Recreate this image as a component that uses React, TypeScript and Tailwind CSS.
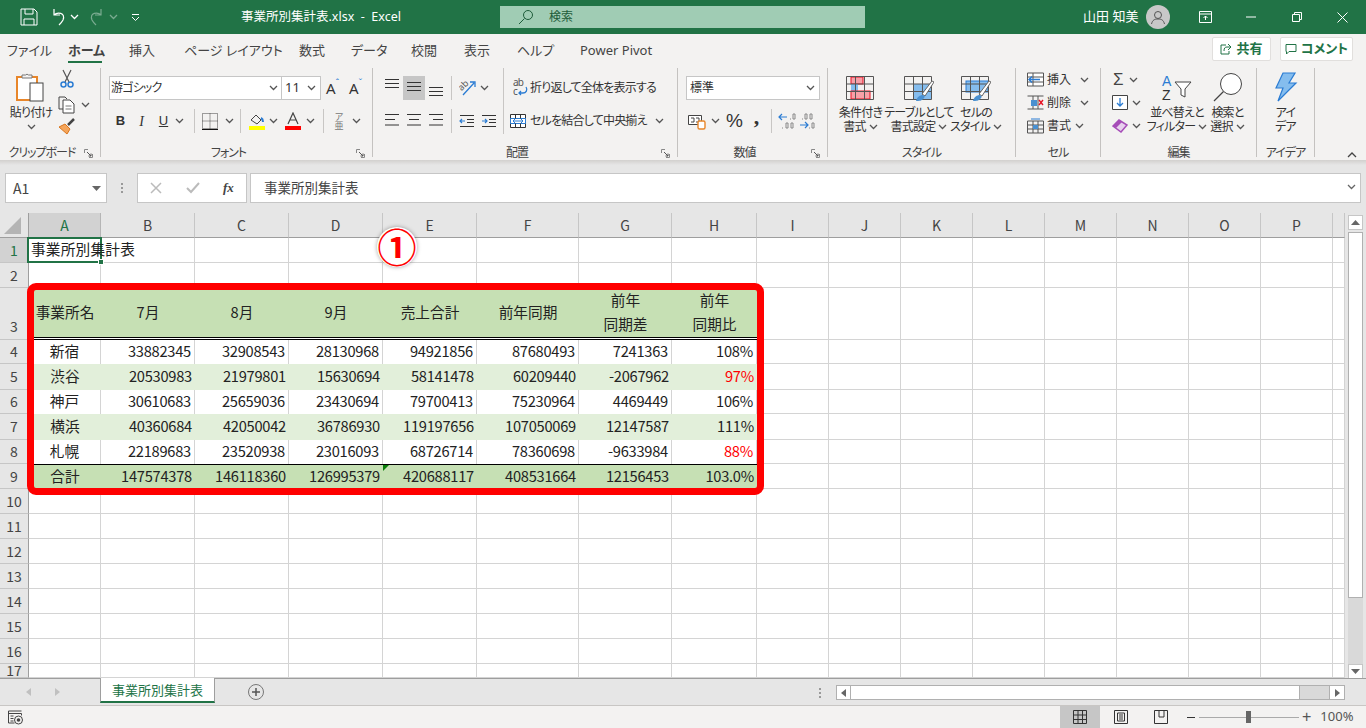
import type { ReactNode } from 'react'

const tabs = [
  { label: 'ファイル', cls: 'w-[38px] ml-[7px]' },
  { label: 'ホーム', cls: 'w-[34px] ml-[23px] font-bold border-b-[2px] border-[#217346]' },
  { label: '挿入', cls: 'w-[26px] ml-[27px]' },
  { label: 'ページ レイアウト', cls: 'w-[86px] ml-[29px]' },
  { label: '数式', cls: 'w-[26px] ml-[29px]' },
  { label: 'データ', cls: 'w-[33px] ml-[26px]' },
  { label: '校閲', cls: 'w-[26px] ml-[27px]' },
  { label: '表示', cls: 'w-[26px] ml-[27px]' },
  { label: 'ヘルプ', cls: 'w-[33px] ml-[27px]' },
  { label: 'Power Pivot', cls: 'w-[76px] ml-[30px]' },
]

const columns = ['A', 'B', 'C', 'D', 'E', 'F', 'G', 'H', 'I', 'J', 'K', 'L', 'M', 'N', 'O', 'P', '']

const tableRows: Record<number, string[]> = {
  4: ['新宿', '33882345', '32908543', '28130968', '94921856', '87680493', '7241363', '108%'],
  5: ['渋谷', '20530983', '21979801', '15630694', '58141478', '60209440', '-2067962', '97%'],
  6: ['神戸', '30610683', '25659036', '23430694', '79700413', '75230964', '4469449', '106%'],
  7: ['横浜', '40360684', '42050042', '36786930', '119197656', '107050069', '12147587', '111%'],
  8: ['札幌', '22189683', '23520938', '23016093', '68726714', '78360698', '-9633984', '88%'],
  9: ['合計', '147574378', '146118360', '126995379', '420688117', '408531664', '12156453', '103.0%'],
}

const headerRow = ['事業所名', '7月', '8月', '9月', '売上合計', '前年同期', '前年\n同期差', '前年\n同期比']

const rowHeights: Record<number, string> = {
  3: 'h-[52px]',
  4: 'h-[24px]',
  5: 'h-[26px]',
  6: 'h-[24px]',
  7: 'h-[26px]',
  8: 'h-[24px]',
  17: 'h-[14px]',
}

function Chev({ color = '#555' }: { color?: string }) {
  return (
    <svg width="9" height="6" viewBox="0 0 9 6" className="shrink-0">
      <path d="M1 1l3.500 3.500L8 1" fill="none" stroke={color} strokeWidth="1.300" />
    </svg>
  )
}

function Launcher() {
  return (
    <svg width="9" height="9" viewBox="0 0 9 9">
      <path d="M.5 4V.5H4M8.500 5v3.500H5" fill="none" stroke="#888" />
      <path d="M3 3l4 4M7 4.500V7H4.500" fill="none" stroke="#555" />
    </svg>
  )
}

function Sep() {
  return <div className="w-px h-[24px] bg-[#c8c6c4] shrink-0" />
}

function Lines({ ys, widths }: { ys: number[]; widths: [number, number][] }) {
  return (
    <svg width="16" height="24" viewBox="0 0 16 24">
      {ys.map((y, i) => (
        <path key={y} d={`M${widths[i][0]} ${y}H${widths[i][1]}`} stroke="#333" strokeWidth="1" />
      ))}
    </svg>
  )
}

function Group({ w, label, launcher, children }: { w: string; label: string; launcher?: boolean; children: ReactNode }) {
  return (
    <div className={`${w} h-[89px] shrink-0 border-r border-[#c4c2c0] flex flex-col`}>
      <div className="h-[76px] flex">{children}</div>
      <div className="h-[13px] flex leading-[16px] pt-[1px] text-[12px] tracking-[-1px] text-[#444]">
        <span className="flex-1 text-center">{label}</span>
        {launcher && (
          <span className="w-[16px] pt-[4px]">
            <Launcher />
          </span>
        )}
      </div>
    </div>
  )
}

function BigBtn({ w, icon, l1, l2, noChev }: { w: string; icon: ReactNode; l1: string; l2: string; noChev?: boolean }) {
  return (
    <div className={`${w} pt-[8px] flex flex-col items-center text-[12px] tracking-[-0.8px] leading-[14px] text-[#333] whitespace-nowrap`}>
      <div className="h-[30px]">{icon}</div>
      <div>{l1}</div>
      <div className="flex items-center gap-[3px]">
        {l2}
        {!noChev && <Chev />}
      </div>
    </div>
  )
}

function SmallRow({ icon, label, chevCls }: { icon: ReactNode; label: string; chevCls: string }) {
  return (
    <div className="h-[23px] flex items-center text-[12px] text-[#333]">
      <div className="w-[20px]">{icon}</div>
      <span>{label}</span>
      <span className={chevCls}>
        <Chev />
      </span>
    </div>
  )
}

function ClipboardGroup() {
  return (
    <Group w="w-[101px]" label="クリップボード" launcher>
      <div className="w-[60px] pt-[4px] flex flex-col items-center text-[12px] tracking-[-0.8px] leading-[14px] text-[#333] pl-[2px]">
        <div className="h-[34px] w-[30px]">
          <svg width="30" height="30" viewBox="0 0 30 30">
            <rect x="1" y="5" width="20" height="23" fill="#fff" stroke="#e8862a" strokeWidth="2" />
            <path d="M6 6V3h3.500a2 2 0 0 1 3 0H16v3z" fill="#f3f2f1" stroke="#777" />
            <rect x="14" y="11" width="13" height="18" fill="#fff" stroke="#444" />
          </svg>
        </div>
        <div>貼り付け</div>
        <div className="h-[14px] flex items-center">
          <Chev />
        </div>
      </div>
      <div className="flex flex-col">
        <div className="h-[23px]">
          <svg width="16" height="20" viewBox="0 0 16 20" className="ml-[-1px] mt-[1px]">
            <path d="M4 1l6 12M12 1L6 13" stroke="#555" strokeWidth="1.200" fill="none" />
            <circle cx="4.500" cy="15.500" r="2.500" fill="none" stroke="#2b7cd3" strokeWidth="1.500" />
            <circle cx="11.500" cy="15.500" r="2.500" fill="none" stroke="#2b7cd3" strokeWidth="1.500" />
          </svg>
        </div>
        <div className="h-[24px] flex items-center gap-[5px] pt-[3px] ml-[-2px]">
          <svg width="18" height="18" viewBox="0 0 18 18">
            <path d="M5 13H1V1h6l2 2" fill="none" stroke="#444" />
            <path d="M5 4h7l4 4v9H5z" fill="#fff" stroke="#444" />
            <path d="M7.500 10h6M7.500 13h6" stroke="#777" />
          </svg>
          <Chev />
        </div>
        <div className="h-[23px] pt-[2px] ml-[-2px]">
          <svg width="18" height="18" viewBox="0 0 18 18">
            <path d="M1 10l6-3 5 5-3 5z" fill="#f5a55a" stroke="#d9761e" />
            <path d="M10 8l6-6" stroke="#444" strokeWidth="2.500" />
          </svg>
        </div>
      </div>
    </Group>
  )
}

function FontGroup() {
  return (
    <Group w="w-[272px]" label="フォント" launcher>
      <div className="pt-[8px] flex flex-col gap-[9px] text-[#333]">
        <div className="flex h-[24px] items-center pl-[8px]">
          <div className="w-[173px] h-[24px] bg-white border border-[#c6c6c6] flex items-center justify-between pl-[1px] pr-[3px] text-[12px] tracking-[-0.8px]">
            游ゴシック
            <Chev />
          </div>
          <div className="w-[40px] h-[24px] ml-[-1px] bg-white border border-[#c6c6c6] flex items-center justify-between pl-[3px] pr-[4px] text-[13px]">
            11
            <Chev />
          </div>
          <div className="w-[22px] ml-[-1px] pl-[6px] text-[15px] flex items-start">
            A<span className="text-[#2b7cd3] text-[9px] leading-[12px]">ˆ</span>
          </div>
          <div className="w-[22px] ml-[1px] pl-[6px] text-[15px] flex items-start">
            A<span className="text-[#2b7cd3] text-[9px] leading-[12px]">ˇ</span>
          </div>
        </div>
        <div className="flex h-[24px] items-center pl-[9px]">
          <div className="w-[21px] text-center font-['Liberation_Sans'] font-bold text-[13px]">B</div>
          <div className="w-[21px] text-center font-['Liberation_Serif'] italic text-[14px]">I</div>
          <div className="w-[23px] text-center font-['Liberation_Sans'] text-[13px] underline">U</div>
          <div className="w-[14px]">
            <Chev />
          </div>
          <div className="ml-[5px]">
            <Sep />
          </div>
          <div className="w-[30px] flex justify-center">
            <svg width="16" height="17" viewBox="0 0 16 17">
              <path d="M.5.5h15v15H.5zM8 .5v15M.5 8h15" fill="none" stroke="#444" strokeDasharray="1 1" />
              <path d="M0 16.500h16" stroke="#111" />
            </svg>
          </div>
          <div className="w-[15px]">
            <Chev />
          </div>
          <Sep />
          <div className="w-[29px] flex justify-center ml-[1px]">
            <svg width="16" height="18" viewBox="0 0 16 18">
              <path d="M2 8l5-5 5 5-4 4z" fill="none" stroke="#444" />
              <path d="M12 6c2 1 2 3 2 4" stroke="#2b7cd3" strokeWidth="2" fill="none" />
              <rect y="14" width="16" height="4" fill="#ffff00" />
            </svg>
          </div>
          <div className="w-[13px] ml-[-2px]">
            <Chev />
          </div>
          <div className="w-[22px] flex justify-center">
            <svg width="16" height="18" viewBox="0 0 16 18">
              <path d="M3 12L8 1l5 11M5 8h6" fill="none" stroke="#444" strokeWidth="1.200" />
              <rect y="14" width="16" height="4" fill="#ff0000" />
            </svg>
          </div>
          <div className="w-[13px] ml-[2px]">
            <Chev />
          </div>
          <div className="ml-[4px]">
            <Sep />
          </div>
          <div className="w-[30px] text-center text-[9px] leading-[9px] text-[#777]">
            ア<br />亜
          </div>
          <div className="w-[15px] ml-[-2px]">
            <Chev />
          </div>
        </div>
      </div>
    </Group>
  )
}

function AlignGroup() {
  return (
    <Group w="w-[305px]" label="配置" launcher>
      <div className="w-[131px] pl-[8px] pt-[8px] flex flex-col gap-[9px] border-r border-[#c8c6c4] h-[66px]">
        <div className="flex h-[24px] items-center">
          <div className="w-[22px] flex justify-center">
            <Lines ys={[3.5, 7.5, 11.5]} widths={[[1, 15], [1, 15], [1, 15]]} />
          </div>
          <div className="w-[22px] h-[24px] flex justify-center bg-[#c6c6c6]">
            <Lines ys={[6.5, 10.5, 14.5]} widths={[[1, 15], [1, 15], [1, 15]]} />
          </div>
          <div className="w-[22px] flex justify-center">
            <Lines ys={[11.5, 15.5, 19.5]} widths={[[1, 15], [1, 15], [1, 15]]} />
          </div>
          <div className="ml-[4px]">
            <Sep />
          </div>
          <div className="w-[24px] ml-[4px] flex justify-center">
            <svg width="18" height="18" viewBox="0 0 18 18">
              <path d="M4 16L15 4M11 3h5v5" fill="none" stroke="#2b7cd3" strokeWidth="1.300" />
              <text x="0" y="10" fontSize="9" fill="#555" transform="rotate(-45 4 8)">ab</text>
            </svg>
          </div>
          <Chev />
        </div>
        <div className="flex h-[24px] items-center">
          <div className="w-[22px] flex justify-center">
            <Lines ys={[5.5, 10.5, 16]} widths={[[1, 15], [1, 11], [1, 15]]} />
          </div>
          <div className="w-[22px] flex justify-center">
            <Lines ys={[5.5, 10.5, 16]} widths={[[1, 15], [3, 13], [1, 15]]} />
          </div>
          <div className="w-[22px] flex justify-center">
            <Lines ys={[5.5, 10.5, 16]} widths={[[1, 15], [5, 15], [1, 15]]} />
          </div>
          <div className="ml-[4px]">
            <Sep />
          </div>
          {[0, 1].map((i) => (
            <div key={i} className={i === 0 ? 'w-[22px] ml-[4px] flex justify-center' : 'w-[22px] flex justify-center'}>
              <svg width="16" height="16" viewBox="0 0 16 16">
                <path d="M1 2.500h14M1 13.500h14" stroke="#333" />
                <path d="M8 6.500h7M8 9.500h7" stroke="#333" />
                <path d={i === 0 ? 'M6 8H1m2-2L1 8l2 2' : 'M1 8h5M4 6l2 2-2 2'} fill="none" stroke="#2b7cd3" strokeWidth="1.200" />
              </svg>
            </div>
          ))}
        </div>
      </div>
      <div className="pt-[8px] flex flex-col gap-[9px] text-[12px] tracking-[-0.8px] text-[#333] whitespace-nowrap">
        <div className="flex h-[24px] items-center pl-[6px]">
          <div className="w-[20px] pl-[3px]">
            <svg width="16" height="20" viewBox="0 0 16 20">
              <text x="0" y="8" fontSize="10" fill="#555">ab</text>
              <text x="0" y="17" fontSize="10" fill="#555">c</text>
              <path d="M13 9c2 3 0 6-3 6H6m2-2l-2 2 2 2" fill="none" stroke="#2b7cd3" strokeWidth="1.300" />
            </svg>
          </div>
          折り返して全体を表示する
        </div>
        <div className="flex h-[24px] items-center pl-[6px]">
          <div className="w-[20px]">
            <svg width="16" height="16" viewBox="0 0 16 16">
              <path d="M.5 1.500h15v13H.5z" fill="#fff" stroke="#333" />
              <path d="M.5 5.500h15v5H.5z" fill="#fff" stroke="#2b7cd3" />
              <path d="M5.500 1.500v4M10.500 1.500v4M5.500 10.500v4M10.500 10.500v4" stroke="#333" />
              <path d="M3 8h10M5 6l-2 2 2 2M11 6l2 2-2 2" fill="none" stroke="#2b7cd3" />
            </svg>
          </div>
          <span className="w-[125px]">セルを結合して中央揃え</span>
          <Chev />
        </div>
      </div>
    </Group>
  )
}

function NumberGroup() {
  return (
    <Group w="w-[150px]" label="数値" launcher>
      <div className="pt-[8px] pl-[8px] flex flex-col gap-[9px] text-[#333]">
        <div className="w-[134px] h-[24px] bg-white border border-[#c6c6c6] flex items-center justify-between pl-[3px] pr-[4px] text-[12px]">
          標準
          <Chev />
        </div>
        <div className="flex h-[24px] items-center pl-[2px]">
          <svg width="18" height="18" viewBox="0 0 18 18">
            <path d="M.5 3.500h13v9H.5z" fill="#fff" stroke="#444" />
            <path d="M3 6h3v4H3M8 6h3v4H8" fill="none" stroke="#444" />
            <rect x="10" y="9" width="7" height="8" rx="1.500" fill="#fff" stroke="#e8862a" strokeWidth="1.400" />
          </svg>
          <div className="w-[18px] pl-[5px]">
            <Chev />
          </div>
          <div className="w-[21px] text-center text-[19px] leading-[24px] font-['Liberation_Sans']">%</div>
          <div className="w-[17px] ml-[3px] text-center text-[22px] leading-[18px] mt-[-8px] font-bold font-['Liberation_Serif']">,</div>
          <div className="ml-[6px]">
            <Sep />
          </div>
          <div className="w-[24px] flex justify-center ml-[3px]">
            <svg width="20" height="18" viewBox="0 0 20 18">
              <path d="M10 5H2m3-3L2 5l3 3" fill="none" stroke="#2b7cd3" strokeWidth="1.200" />
              <path d="M13 7h1M16 2h2v5h-2z M5 16h1M9 11h2v5H9zM14 11h2v5h-2z" fill="none" stroke="#888" />
            </svg>
          </div>
          <div className="w-[18px] flex justify-center">
            <svg width="18" height="18" viewBox="0 0 18 18">
              <path d="M3 7h1M6 2h2v5H6zM11 2h2v5h-2zM10 16h1M13 11h2v5h-2z" fill="none" stroke="#888" />
              <path d="M1 13h8m-3-3l3 3-3 3" fill="none" stroke="#2b7cd3" strokeWidth="1.200" />
            </svg>
          </div>
        </div>
      </div>
    </Group>
  )
}

function TableIcon({ kind }: { kind: 'cond' | 'table' | 'cell' }) {
  return (
    <svg width="30" height="26" viewBox="0 0 30 26">
      {kind === 'cond' && (
        <>
          <rect x="5" y="1" width="12" height="7" fill="#f8a0a8" stroke="#e81123" />
          <rect x="5" y="8" width="7" height="7" fill="#85bdee" />
          <rect x="5" y="15" width="19" height="8" fill="#f8a0a8" stroke="#e81123" />
        </>
      )}
      {kind === 'table' && <rect x="10" y="8" width="18" height="15" fill="#85bdee" />}
      {kind === 'cell' && <rect x="5" y="5" width="22" height="11" fill="#85bdee" stroke="#2b7cd3" />}
      <path d="M.5.5h27v23H.5zM.5 8h27M.5 15.500h27M9.500 .5v23M18.500 .5v23" fill="none" stroke="#555" />
      {kind !== 'cond' && (
        <>
          <path d="M18 18L28 5l2 1-9 14z" fill="#fff" stroke="#666" />
          <path d="M12 25c1-4 4-6 7-6 2 1 2 2 1 3-2 3-5 3-8 3z" fill="#4a90d0" />
        </>
      )}
    </svg>
  )
}

function StyleGroup() {
  return (
    <Group w="w-[188px]" label="スタイル">
      <div className="flex pl-[8px]">
        <BigBtn w="w-[49px]" icon={<TableIcon kind="cond" />} l1="条件付き" l2="書式" />
        <BigBtn w="w-[68px]" icon={<TableIcon kind="table" />} l1="テーブルとして" l2="書式設定" />
        <BigBtn w="w-[46px]" icon={<TableIcon kind="cell" />} l1="セルの" l2="スタイル" />
      </div>
    </Group>
  )
}

function CellsGroup() {
  return (
    <Group w="w-[85px]" label="セル">
      <div className="pl-[11px] flex flex-col">
        <SmallRow
          label="挿入"
          chevCls="ml-[9px]"
          icon={
            <svg width="17" height="15" viewBox="0 0 17 15">
              <path d="M.5 1h16v13H.5zM.5 5h16M.5 10h16M6 1v13" fill="#fff" stroke="#555" />
              <path d="M13 7.500H2m3-3l-3 3 3 3" fill="none" stroke="#2b7cd3" strokeWidth="1.500" />
            </svg>
          }
        />
        <SmallRow
          label="削除"
          chevCls="ml-[9px]"
          icon={
            <svg width="17" height="15" viewBox="0 0 17 15">
              <path d="M.5 1h16M.5 14h16M6 1v13M11 1v13" fill="none" stroke="#555" />
              <rect x="4" y="5" width="6" height="6" fill="#4a90d0" />
              <path d="M12 5l4 5m0-5l-4 5" stroke="#e81123" strokeWidth="1.400" />
            </svg>
          }
        />
        <SmallRow
          label="書式"
          chevCls="ml-[4px]"
          icon={
            <svg width="17" height="16" viewBox="0 0 17 16">
              <path d="M.5 3h16v12H.5zM6 3v12M11 3v12M.5 7h16M.5 11h16" fill="none" stroke="#555" />
              <rect x="6" y="7" width="5" height="4" fill="#4a90d0" />
              <path d="M4 1h9" stroke="#2b7cd3" />
            </svg>
          }
        />
      </div>
    </Group>
  )
}

function EditGroup() {
  return (
    <Group w="w-[156px]" label="編集">
      <div className="w-[47px] pl-[11px] flex flex-col">
        <div className="h-[23px] flex items-center gap-[5px] text-[17px] text-[#444] pl-[1px] font-['Liberation_Sans']">
          Σ
          <Chev />
        </div>
        <div className="h-[23px] flex items-center gap-[4px]">
          <svg width="16" height="15" viewBox="0 0 16 15">
            <path d="M.5.500h15v14H.5z" fill="#fff" stroke="#444" />
            <path d="M8 3v8M5 8l3 3 3-3" fill="none" stroke="#2b7cd3" strokeWidth="1.300" />
          </svg>
          <Chev />
        </div>
        <div className="h-[23px] flex items-center gap-[4px]">
          <svg width="16" height="14" viewBox="0 0 16 14">
            <path d="M1 7l6-6 8 5-6 7z" fill="#e8d0ee" stroke="#a64db8" strokeWidth="1.500" />
            <path d="M1 7l6-6 3 2-6 6z" fill="#a64db8" />
          </svg>
          <Chev />
        </div>
      </div>
      <BigBtn
        w="w-[58px]"
        l1="並べ替えと"
        l2="フィルター"
        icon={
          <div className="relative w-[30px] h-[30px] mt-[-2px] text-[14px] leading-[14px] font-['Liberation_Sans'] tracking-normal">
            <div className="text-[#2b7cd3]">A</div>
            <div className="text-[#333]">Z</div>
            <svg width="18" height="18" viewBox="0 0 18 18" className="absolute left-[12px] top-[7px]">
              <path d="M1 1h16l-6 7v8l-4-2V8z" fill="#fff" stroke="#444" />
            </svg>
          </div>
        }
      />
      <BigBtn
        w="w-[43px]"
        l1="検索と"
        l2="選択"
        icon={
          <svg width="30" height="30" viewBox="0 0 30 30" className="mt-[-4px]">
            <circle cx="18" cy="12" r="10.500" fill="#fff" stroke="#444" />
            <path d="M10.500 19.500L1 29" stroke="#444" strokeWidth="1.200" />
          </svg>
        }
      />
    </Group>
  )
}

function Ribbon() {
  return (
    <div className="h-[96px] bg-[#f3f2f1] pt-[4px] flex relative">
      <ClipboardGroup />
      <FontGroup />
      <AlignGroup />
      <NumberGroup />
      <StyleGroup />
      <CellsGroup />
      <EditGroup />
      <Group w="w-[58px]" label="アイデア">
        <BigBtn
          w="w-[57px]"
          l1="アイ"
          l2="デア"
          noChev
          icon={
            <svg width="24" height="30" viewBox="0 0 24 30" className="mt-[-4px]">
              <path d="M9 1h12l-6 10h7L4 29l5-13H2z" fill="#85bdee" stroke="#2b7cd3" strokeWidth="1.200" />
            </svg>
          }
        />
      </Group>
      <div className="flex-1 flex justify-end items-end pr-[9px] pb-[2px]">
        <svg width="10" height="6" viewBox="0 0 10 6">
          <path d="M1 5l4-4 4 4" fill="none" stroke="#444" strokeWidth="1.300" />
        </svg>
      </div>
    </div>
  )
}

function TitleBar() {
  return (
    <div className="h-[34px] bg-[#217346] flex items-center text-white text-[12.500px]">
      <div className="w-[241px] flex items-center pl-[20px]">
        <svg width="18" height="18" viewBox="0 0 18 18">
          <path d="M1 1h13l3 3v13H1zM5 1v5h8V1M4 17v-6h10v6" fill="none" stroke="#fff" />
        </svg>
        <svg width="18" height="18" viewBox="0 0 18 18" className="ml-[11px]">
          <path d="M5 1v6h6M5 7c3-3 12-3 9 5-1 2-2 3-4 5" fill="none" stroke="#fff" strokeWidth="1.200" />
        </svg>
        <span className="ml-[3px]">
          <Chev color="#fff" />
        </span>
        <svg width="18" height="18" viewBox="0 0 18 18" className="ml-[9px] opacity-40">
          <path d="M13 1v6H7M13 7c-3-3-12-3-9 5 1 2 2 3 4 5" fill="none" stroke="#fff" strokeWidth="1.200" />
        </svg>
        <span className="ml-[3px] opacity-40">
          <Chev color="#fff" />
        </span>
        <svg width="9" height="9" viewBox="0 0 9 9" className="ml-[13px]">
          <path d="M1 1.500h7M1 4l3.500 3.500L8 4" fill="none" stroke="#fff" />
        </svg>
      </div>
      <div className="w-[259px] whitespace-pre">事業所別集計表.xlsx  -  Excel</div>
      <div className="w-[365px] h-[22px] bg-[#a0ccb4] flex items-center text-[#1e5c3a] text-[12px]">
        <svg width="16" height="16" viewBox="0 0 16 16" className="ml-[18px]">
          <circle cx="10" cy="6" r="4.500" fill="none" stroke="#1e5c3a" />
          <path d="M6.500 9.500L1 15" stroke="#1e5c3a" />
        </svg>
        <span className="ml-[15px]">検索</span>
      </div>
      <div className="ml-[218px] w-[52px] text-[13px] whitespace-nowrap">山田 知美</div>
      <div className="ml-[11px] w-[24px] h-[24px] rounded-full bg-[#c8c8c8] flex items-center justify-center overflow-hidden">
        <svg width="16" height="16" viewBox="0 0 16 16">
          <circle cx="8" cy="6" r="3.500" fill="none" stroke="#555" />
          <path d="M1.500 15c1-4 3-5 6.500-5s5.500 1 6.500 5" fill="none" stroke="#555" />
        </svg>
      </div>
      <svg width="13" height="12" viewBox="0 0 13 12" className="ml-[29px]">
        <path d="M.5.500h12v11H.5zM.5 3h12M6.500 9V5M4.500 7l2-2 2 2" fill="none" stroke="#fff" />
      </svg>
      <svg width="10" height="2" viewBox="0 0 10 2" className="ml-[34px]">
        <path d="M0 1h10" stroke="#fff" />
      </svg>
      <svg width="10" height="10" viewBox="0 0 10 10" className="ml-[36px]">
        <path d="M.5 2.500h7v7h-7zM2.500 2.500v-2h7v7h-2" fill="none" stroke="#fff" />
      </svg>
      <svg width="11" height="11" viewBox="0 0 11 11" className="ml-[35px]">
        <path d="M.5.500l10 10m0-10l-10 10" stroke="#fff" />
      </svg>
    </div>
  )
}

function TabRow() {
  return (
    <div className="h-[30px] bg-[#f3f2f1] flex items-center text-[13px] text-[#444] relative">
      {tabs.map((t) => (
        <div key={t.label} className={`${t.cls} h-[27px] pt-[2px] leading-[24px] whitespace-nowrap shrink-0`}>
          {t.label}
        </div>
      ))}
      <div className="ml-auto flex gap-[9px] pr-[13px] font-bold text-[#217346]">
        <div className="w-[59px] h-[24px] bg-white border border-[#e1dfdd] rounded-[2px] flex items-center justify-center gap-[4px]">
          <svg width="12" height="12" viewBox="0 0 12 12">
            <path d="M8 1l3 3-3 3M11 4H7C5 4 4 5 4 8M6 2H1v9h8V8" fill="none" stroke="#217346" />
          </svg>
          共有
        </div>
        <div className="w-[73px] h-[24px] bg-white border border-[#e1dfdd] rounded-[2px] flex items-center justify-center gap-[4px]">
          <svg width="12" height="12" viewBox="0 0 12 12">
            <path d="M1 1.500h10v7H4L1.500 11V8.500H1z" fill="none" stroke="#217346" />
          </svg>
          コメント
        </div>
      </div>
    </div>
  )
}

function FormulaBar() {
  return (
    <div className="h-[53px] bg-[#e6e6e6] font-['Noto_Sans_CJK_JP',sans-serif]">
      <div className="h-[5px] bg-gradient-to-b from-[#d2d0ce] to-[#e6e6e6]" />
      <div className="flex h-[30px] mt-[8px] pl-[5px] text-[#444]">
        <div className="w-[102px] bg-white border border-[#c6c6c6] flex items-center justify-between pl-[7px] pr-[5px] text-[14px]">
          A1
          <svg width="9" height="5" viewBox="0 0 9 5">
            <path d="M0 0h9L4.500 5z" fill="#666" />
          </svg>
        </div>
        <div className="w-[30px] flex flex-col items-center justify-center gap-[2px]">
          <div className="w-[2px] h-[2px] bg-[#999]" />
          <div className="w-[2px] h-[2px] bg-[#999]" />
          <div className="w-[2px] h-[2px] bg-[#999]" />
        </div>
        <div className="w-[110px] bg-white border border-[#c6c6c6] flex items-center">
          <svg width="12" height="12" viewBox="0 0 12 12" className="ml-[12px]">
            <path d="M1 1l10 10m0-10L1 11" stroke="#bbb" strokeWidth="1.500" />
          </svg>
          <svg width="14" height="12" viewBox="0 0 14 12" className="ml-[24px]">
            <path d="M1 6l4 4 8-9" fill="none" stroke="#bbb" strokeWidth="2" />
          </svg>
          <span className="ml-[23px] font-['Liberation_Serif'] italic font-bold text-[13px]">fx</span>
        </div>
        <div className="w-[1111px] ml-[3px] bg-white border border-[#c6c6c6] flex items-center justify-between pl-[13px] pr-[4px] pb-[2px] text-[13.500px]">
          事業所別集計表
          <Chev color="#666" />
        </div>
      </div>
    </div>
  )
}

function dataCellClass(rowNo: number, colIdx: number) {
  const base = 'flex items-center whitespace-nowrap px-[3px] pb-[2px] tracking-[-0.25px]'
  if (rowNo === 3 && colIdx <= 7) return `${base} justify-center text-center bg-[#c6e0b4] bg-clip-padding border-b-[3px] border-double border-black leading-[24px] tracking-normal`
  if (rowNo >= 4 && rowNo <= 9 && colIdx <= 7) {
    const align = colIdx === 0 ? 'justify-center tracking-normal' : 'justify-end'
    if (rowNo === 9) return `${base} ${align} bg-[#c6e0b4] border-t border-black`
    if (rowNo === 5 || rowNo === 7) return `${base} ${align} bg-[#e2efda]`
    return `${base} ${align} bg-white border-r border-[#d4d4d4]`
  }
  return `${base} bg-white border-r border-b border-[#d4d4d4]`
}

function Sheet() {
  const rowNos = Array.from({ length: 17 }, (_, i) => i + 1)
  return (
    <div className="h-[465px] flex bg-[#e6e6e6] overflow-hidden font-['Noto_Sans_CJK_JP',sans-serif] [font-feature-settings:'normal']">
      <div className="relative w-[1345px] shrink-0 text-[14.670px] text-[#222] bg-white">
        <div className="grid grid-cols-[29px_72px_94px_94px_94px_94px_102px_93px_85px_72px_72px_72px_72px_72px_72px_72px_72px_12px]">
          <div className="h-[25px] border-r border-b border-[#9e9e9e] bg-[#e6e6e6] flex items-center justify-center">
            <svg width="18" height="17" viewBox="0 0 18 17" className="ml-[-2px]">
              <path d="M17 0v17H0z" fill="#b4b4b4" />
            </svg>
          </div>
          {columns.map((c, i) => (
            <div
              key={i}
              className={
                i === 0
                  ? 'h-[25px] bg-[#d2d2d2] border-r border-b border-r-[#b5b5b5] border-b-[#9e9e9e] flex items-center justify-center text-[14px] text-[#217346]'
                  : 'h-[25px] bg-[#e6e6e6] border-r border-b border-r-[#c6c6c6] border-b-[#9e9e9e] flex items-center justify-center text-[14px] text-[#444]'
              }
            >
              {c}
            </div>
          ))}
          {rowNos.map((r) => {
            const h = rowHeights[r] ?? 'h-[25px]'
            return [
              <div
                key={`h${r}`}
                className={`${h} ${r === 1 ? 'bg-[#d2d2d2] text-[#217346]' : 'bg-[#e6e6e6] text-[#444]'} ${r === 3 ? 'items-end pb-[3px]' : 'items-center pb-[1px]'} border-r border-b border-r-[#9e9e9e] border-b-[#c6c6c6] flex justify-center text-[14px] leading-[20px]`}
              >
                {r}
              </div>,
              ...columns.map((_, c) => {
                const text = r === 3 ? headerRow[c] : tableRows[r]?.[c]
                const red = c === 7 && (r === 5 || r === 8)
                return (
                  <div key={`${r}-${c}`} className={`${h} ${dataCellClass(r, c)} ${red ? 'text-[#ff0000]' : ''}`}>
                    {r === 1 && c === 0 ? (
                      <span className="relative z-10 tracking-[0.2px] ml-[-1px]">事業所別集計表</span>
                    ) : (
                      <span className="whitespace-pre-line">{text}</span>
                    )}
                  </div>
                )
              }),
            ]
          })}
        </div>

        {/* selected cell A1 */}
        <div className="absolute left-[27px] top-[24px] w-[75px] h-[26px] border-2 border-[#217346]" />
        <div className="absolute left-[98px] top-[46px] w-[6px] h-[6px] bg-[#217346] border border-white" />

        {/* green error marker on E9 */}
        <div className="absolute left-[383px] top-[252px] border-t-[6px] border-r-[6px] border-t-[#0a7f0a] border-r-transparent" />

        {/* red highlight frame */}
        <div className="absolute left-[27px] top-[70px] w-[737px] h-[212px] border-[7px] border-[#ff0000] rounded-[9px]" />

        {/* numbered badge */}
        <div className="absolute left-[377px] top-[14px] w-[40px] h-[40px] rounded-full bg-white shadow-[0_0_4px_rgba(0,0,0,0.35)] flex items-center justify-center text-[#ff0000] text-[39px] leading-[36px] pb-[4px] font-bold">
          ①
        </div>
      </div>

      {/* vertical scrollbar */}
      <div className="w-[21px] pl-[3px] pt-[2px] relative">
        <div className="w-[15px] h-[15px] bg-white border border-[#c6c6c6] flex items-center justify-center">
          <svg width="9" height="5" viewBox="0 0 9 5">
            <path d="M4.500 0L9 5H0z" fill="#666" />
          </svg>
        </div>
        <div className="w-[15px] h-[366px] mt-[2px] bg-white border border-[#b0b0b0]" />
        <div className="w-[15px] h-[66px] bg-[#d9d9d9]" />
        <div className="w-[15px] h-[15px] bg-white border border-[#c6c6c6] flex items-center justify-center">
          <svg width="9" height="5" viewBox="0 0 9 5">
            <path d="M0 0h9L4.500 5z" fill="#666" />
          </svg>
        </div>
      </div>
    </div>
  )
}

function SheetTabs() {
  return (
    <div className="h-[28px] bg-[#e6e6e6] border-t border-b border-[#9e9e9e] border-b-[#c8c6c4] flex items-start font-['Noto_Sans_CJK_JP',sans-serif]">
      <div className="w-[100px] h-[26px] flex items-center pl-[26px] gap-[24px]">
        <svg width="5" height="8" viewBox="0 0 5 8">
          <path d="M5 0v8L0 4z" fill="#c0c0c0" />
        </svg>
        <svg width="5" height="8" viewBox="0 0 5 8">
          <path d="M0 0v8l5-4z" fill="#c0c0c0" />
        </svg>
      </div>
      <div className="w-[115px] h-[25px] mt-[-1px] bg-white border-x border-[#9e9e9e] border-b-[2px] border-b-[#217346] flex items-center justify-center text-[13px] text-[#217346]">
        事業所別集計表
      </div>
      <svg width="16" height="16" viewBox="0 0 16 16" className="ml-[33px] mt-[5px]">
        <circle cx="8" cy="8" r="7.500" fill="none" stroke="#777" />
        <path d="M4 8h8M8 4v8" stroke="#555" strokeWidth="1.500" />
      </svg>
      <div className="ml-[555px] mt-[9px] flex flex-col gap-[2px]">
        <div className="w-[2px] h-[2px] bg-[#999]" />
        <div className="w-[2px] h-[2px] bg-[#999]" />
        <div className="w-[2px] h-[2px] bg-[#999]" />
      </div>
      <div className="ml-[15px] mt-[6px] w-[509px] h-[15px] flex border border-[#b0b0b0] bg-[#d9d9d9]">
        <div className="w-[14px] bg-white flex items-center justify-center border-r border-[#b0b0b0]">
          <svg width="5" height="8" viewBox="0 0 5 8">
            <path d="M5 0v8L0 4z" fill="#666" />
          </svg>
        </div>
        <div className="w-[449px] bg-white border-r border-[#b0b0b0]" />
        <div className="w-[29px]" />
        <div className="w-[15px] bg-white flex items-center justify-center border-l border-[#b0b0b0]">
          <svg width="5" height="8" viewBox="0 0 5 8">
            <path d="M0 0v8L5 4z" fill="#666" />
          </svg>
        </div>
      </div>
    </div>
  )
}

function StatusBar() {
  return (
    <div className="h-[22px] bg-[#f3f2f1] flex items-center text-[#555]">
      <svg width="15" height="15" viewBox="0 0 15 15" className="ml-[8px]">
        <path d="M.5 1h13M.5 3.500h13v2M.5 1v12h6" fill="none" stroke="#444" />
        <path d="M2.500 6h3M2.500 8.500h3M2.500 11h3" stroke="#444" />
        <circle cx="10.500" cy="10" r="4" fill="none" stroke="#444" />
        <circle cx="10.500" cy="10" r="1.800" fill="#444" />
      </svg>
      <div className="ml-[1037px] w-[40px] h-[22px] bg-[#c6c6c6] flex items-center justify-center">
        <svg width="14" height="14" viewBox="0 0 14 14">
          <path d="M.5.500h13v13H.5zM5 .500v13M9.500.500v13M.5 5h13M.5 9.500h13" fill="none" stroke="#333" />
        </svg>
      </div>
      <div className="w-[41px] flex justify-center">
        <svg width="14" height="14" viewBox="0 0 14 14">
          <path d="M.5.500h13v13H.5zM3.500 3h7v8h-7zM5 5h4M5 7h4M5 9h4" fill="none" stroke="#333" />
        </svg>
      </div>
      <div className="w-[39px] flex justify-center">
        <svg width="14" height="14" viewBox="0 0 14 14">
          <path d="M.5.500h13v13H.5zM5 .500V7h5V.500" fill="none" stroke="#333" />
        </svg>
      </div>
      <div className="w-[8px] h-px bg-[#333] ml-[7px]" />
      <div className="w-[100px] h-px bg-[#aaa] ml-[4px] relative">
        <div className="absolute left-[47px] top-[-6px] w-[5px] h-[12px] bg-[#666]" />
      </div>
      <div className="ml-[3px] text-[16px] leading-[16px] font-['Liberation_Sans']">+</div>
      <div className="ml-[9px] text-[13px] font-['Noto_Sans']">100%</div>
    </div>
  )
}

export default function App() {
  return (
    <div className="w-[1366px] h-[728px] overflow-hidden bg-[#e6e6e6] font-['Noto_Sans','Noto_Sans_CJK_JP',sans-serif] [font-feature-settings:'palt']">
      <TitleBar />
      <TabRow />
      <Ribbon />
      <FormulaBar />
      <Sheet />
      <SheetTabs />
      <StatusBar />
    </div>
  )
}
